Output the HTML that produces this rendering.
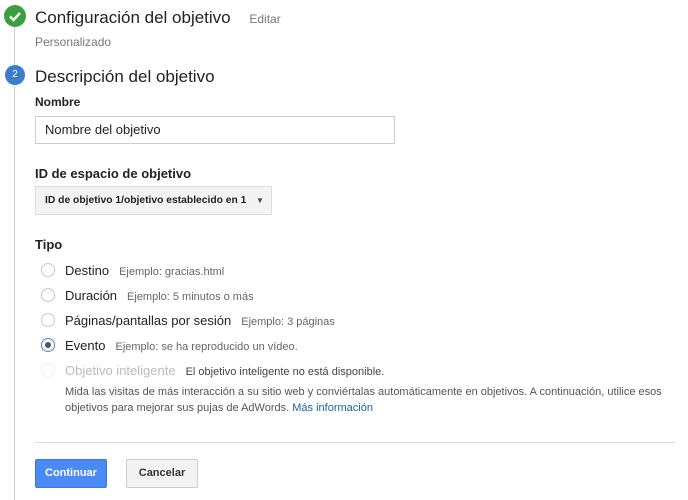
<!DOCTYPE html><html><head><style>
body{margin:0;width:688px;height:493px;background:#fff;font-family:"Liberation Sans",sans-serif;position:relative;overflow:hidden;color:#222}
.a{position:absolute;white-space:nowrap}
.r{position:absolute;left:41px;width:14px;height:14px;border:1px solid #c8c8c8;border-radius:50%;box-sizing:border-box}
.lbl{font-size:13px;color:#222}
.ex{font-size:11px;color:#666;margin-left:10px}
</style></head><body>
<div class="a" style="left:14px;top:20px;width:1px;height:480px;background:#ccc"></div>
<div class="a" style="left:4px;top:5px;width:22px;height:22px;border-radius:50%;background:#3c9e3c"><svg width="22" height="22"><path d="M6 11.5l3.5 3.5 6.5-7" stroke="#fff" stroke-width="2.4" fill="none"/></svg></div>
<div class="a" style="left:5px;top:65px;width:20px;height:20px;border-radius:50%;background:#3a7fcc;color:#fff;font-size:10px;text-align:center;line-height:20px">2</div>
<div class="a" style="left:35px;top:8px;font-size:17px;color:#222">Configuración del objetivo <span style="font-size:12px;color:#777;margin-left:14px">Editar</span></div>
<div class="a" style="left:35px;top:35px;font-size:12px;color:#777">Personalizado</div>
<div class="a" style="left:35px;top:67px;font-size:17px">Descripción del objetivo</div>
<div class="a" style="left:35px;top:95px;font-size:12px;font-weight:bold">Nombre</div>
<div class="a" style="left:35px;top:116px;width:360px;height:28px;border:1px solid #ccc;box-sizing:border-box;font-size:13px;line-height:26px;padding-left:9px">Nombre del objetivo</div>
<div class="a" style="left:35px;top:166px;font-size:13px;font-weight:bold">ID de espacio de objetivo</div>
<div class="a" style="left:35px;top:186px;width:237px;height:29px;border:1px solid #ddd;background:#f3f3f3;box-sizing:border-box;font-size:10.3px;font-weight:bold;line-height:27px;padding-left:9px">ID de objetivo 1/objetivo establecido en 1<span style="position:absolute;left:220px;top:0;font-size:8px;color:#444">▼</span></div>
<div class="a" style="left:35px;top:237px;font-size:13px;font-weight:bold">Tipo</div>
<div class="r" style="top:263px"></div><div class="a" style="left:65px;top:262px"><span class="lbl">Destino</span><span class="ex">Ejemplo: gracias.html</span></div>
<div class="r" style="top:288px"></div><div class="a" style="left:65px;top:287px"><span class="lbl">Duración</span><span class="ex">Ejemplo: 5 minutos o más</span></div>
<div class="r" style="top:313px"></div><div class="a" style="left:65px;top:312px"><span class="lbl">Páginas/pantallas por sesión</span><span class="ex">Ejemplo: 3 páginas</span></div>
<div class="r" style="top:338px;border-color:#4a86e8"><div style="position:absolute;left:3px;top:3px;width:6px;height:6px;border-radius:50%;background:#555"></div></div><div class="a" style="left:65px;top:337px"><span class="lbl">Evento</span><span class="ex">Ejemplo: se ha reproducido un vídeo.</span></div>
<div class="r" style="top:363px;border-color:#f0f0f0"></div><div class="a" style="left:65px;top:362px"><span class="lbl" style="color:#bbb">Objetivo inteligente</span><span class="ex" style="color:#444">El objetivo inteligente no está disponible.</span></div>
<div class="a" style="left:65px;top:384px;font-size:11px;color:#555;line-height:16px">Mida las visitas de más interacción a su sitio web y conviértalas automáticamente en objetivos. A continuación, utilice esos<br>objetivos para mejorar sus pujas de AdWords. <span style="color:#1a62a8">Más información</span></div>
<div class="a" style="left:35px;top:442px;width:640px;height:1px;background:#ddd"></div>
<div class="a" style="left:35px;top:459px;width:72px;height:29px;background:#4a8af4;border:1px solid #3b78e0;box-sizing:border-box;border-radius:2px;color:#fff;font-size:11px;font-weight:bold;text-align:center;line-height:27px">Continuar</div>
<div class="a" style="left:126px;top:459px;width:72px;height:29px;background:#f3f3f3;border:1px solid #ccc;box-sizing:border-box;border-radius:2px;color:#333;font-size:11px;font-weight:bold;text-align:center;line-height:27px">Cancelar</div>
</body></html>
